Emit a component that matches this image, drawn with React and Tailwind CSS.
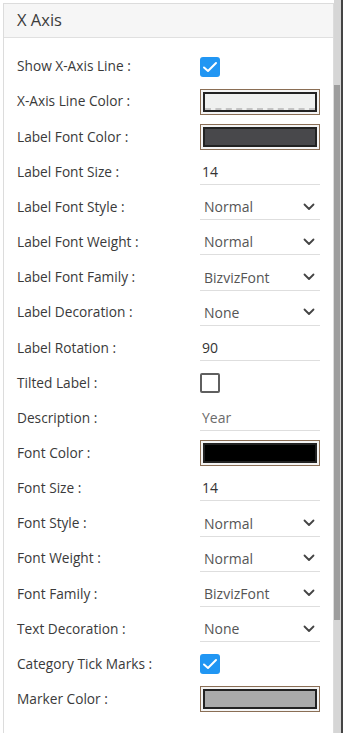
import React from "react";

const Chevron = () => (
  <svg width="12" height="8" viewBox="0 0 12 8" className="shrink-0">
    <path d="M1.5 1.5 L6 6 L10.5 1.5" fill="none" stroke="#444" strokeWidth="1.8" strokeLinecap="round" strokeLinejoin="round" />
  </svg>
);

const Checked = () => (
  <div className="w-[20px] h-[20px] rounded-[3px] bg-[#2196f3] flex items-center justify-center">
    <svg width="16" height="12" viewBox="0 0 16 12">
      <path d="M2 6.5 L6 10 L14 2" fill="none" stroke="white" strokeWidth="2" strokeLinecap="round" strokeLinejoin="round" />
    </svg>
  </div>
);

const Unchecked = () => (
  <div className="w-[20px] h-[20px] rounded-[2px] border-2 border-[#5f5f5f] bg-white" />
);

const ColorBox = ({ color, dashed }) => (
  <div className="w-[120px] h-[26px] border border-[#8a6e55] p-[2px] bg-[#f4f4f4]">
    <div className="w-full h-full border-2 border-[#222] relative" style={{ background: color }}>
      {dashed && <div className="absolute left-0 right-0 bottom-0 border-b-2 border-dashed border-[#c4c4c4]" />}
    </div>
  </div>
);

const TextInput = ({ value, muted }) => (
  <div className="w-[120px] h-[26px] border-b border-[#dedede] flex items-center pl-[2px] text-[14px]">
    <span className={muted ? "text-[#6b6b6b]" : "text-[#333]"}>{value}</span>
  </div>
);

const Select = ({ value }) => (
  <div className="w-[120px] h-[26px] border-b border-[#dedede] flex items-center justify-between pl-[4px] pr-[5px] text-[14px]">
    <span className="text-[#555]">{value}</span>
    <Chevron />
  </div>
);

const rows = [
  ["Show X-Axis Line :", <Checked />],
  ["X-Axis Line Color :", <ColorBox color="#eff0ef" dashed />],
  ["Label Font Color :", <ColorBox color="#48484b" />],
  ["Label Font Size :", <TextInput value="14" />],
  ["Label Font Style :", <Select value="Normal" />],
  ["Label Font Weight :", <Select value="Normal" />],
  ["Label Font Family :", <Select value="BizvizFont" />],
  ["Label Decoration :", <Select value="None" />],
  ["Label Rotation :", <TextInput value="90" />],
  ["Tilted Label :", <Unchecked />],
  ["Description :", <TextInput value="Year" muted />],
  ["Font Color :", <ColorBox color="#000000" />],
  ["Font Size :", <TextInput value="14" />],
  ["Font Style :", <Select value="Normal" />],
  ["Font Weight :", <Select value="Normal" />],
  ["Font Family :", <Select value="BizvizFont" />],
  ["Text Decoration :", <Select value="None" />],
  ["Category Tick Marks :", <Checked />],
  ["Marker Color :", <ColorBox color="#aaaaaa" />],
];

export default function App() {
  return (
    <div
      className="w-[343px] h-[733px] bg-white flex overflow-hidden text-[13.7px] text-[#3a3a3a]"
      style={{ fontFamily: '"Open Sans", "Noto Sans", sans-serif' }}
    >
      <div className="w-[3px] bg-white" />
      <div className="flex-1 flex flex-col border-l border-t border-[#dcdcdc] mt-[3px] border-r">
        <div className="h-[34px] bg-[#f6f6f6] border-b border-[#e0e0e0] flex items-center pl-[13px] text-[16.5px] text-[#3c3c3c]">
          X Axis
        </div>
        <div className="flex flex-col pt-[11px] pl-[13px]">
          {rows.map(([label, ctrl], i) => (
            <div key={i} className="h-[35.17px] flex items-center">
              <div className="w-[183px] shrink-0">{label}</div>
              {ctrl}
            </div>
          ))}
        </div>
      </div>
      <div className="w-[7px] flex flex-col bg-[#d6d6d6] pt-[85px] pb-[113px]">
        <div className="w-[6px] flex-1 bg-[#9e9e9e]" />
      </div>
      <div className="w-[2px] bg-[#444]" />
    </div>
  );
}
